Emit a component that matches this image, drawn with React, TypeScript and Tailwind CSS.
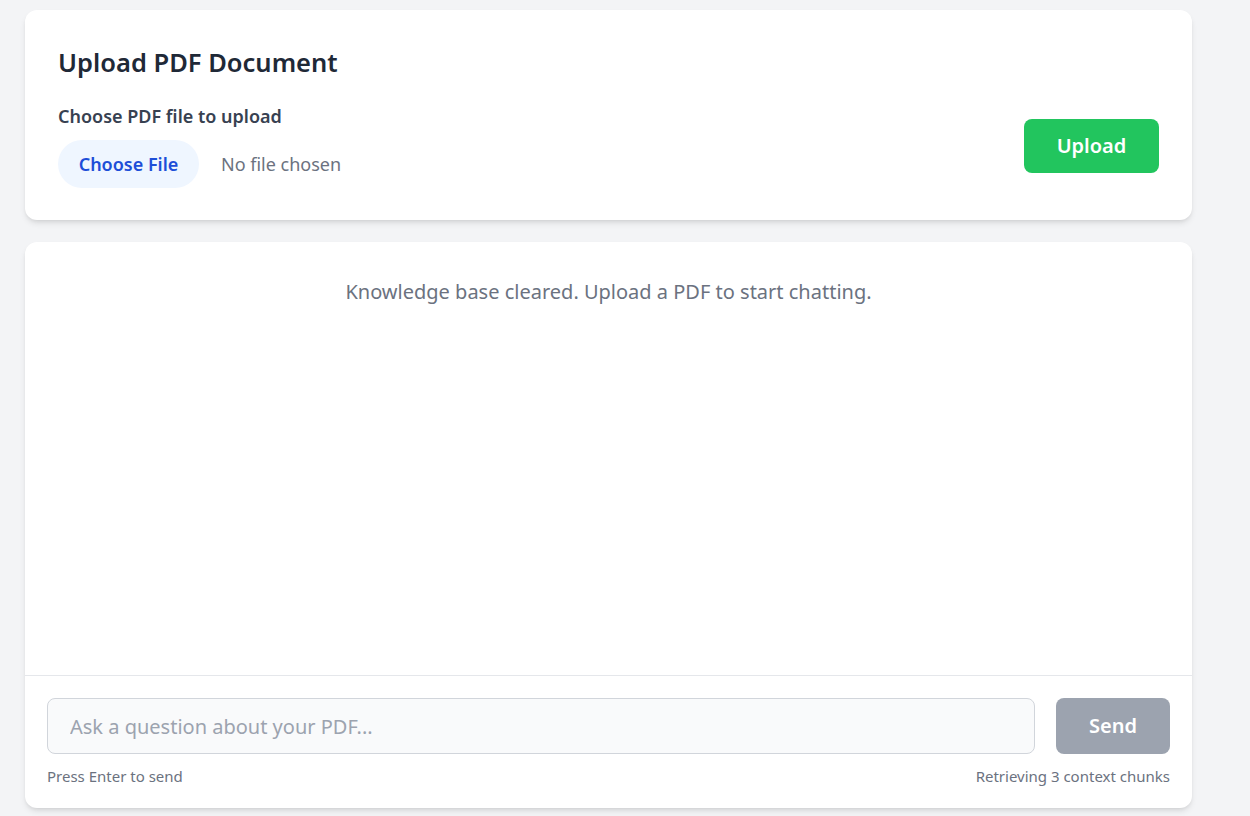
export default function App() {
  return (
    <div className="min-h-screen bg-[#f3f4f6] pl-[25px] pt-[10px] pb-[8px] font-['Noto_Sans',sans-serif]">
      <div className="w-[1167px]">
        {/* Upload card */}
        <div className="h-[210px] bg-white rounded-xl shadow-md px-[33px] pt-[36px]">
          <h1 className="text-[25.5px] leading-[32px] font-semibold text-[#1f2937]">Upload PDF Document</h1>
          <div className="flex items-center justify-between mt-[26px]">
            <div>
              <label className="block text-[18px] leading-[24px] font-semibold text-[#374151]">Choose PDF file to upload</label>
              <div className="flex items-center mt-[12px]">
                <button className="h-[48px] w-[141px] rounded-full bg-[#eff6ff] text-[#1d4ed8] text-[18px] font-semibold">Choose File</button>
                <span className="ml-[22px] text-[18px] text-[#6b7280]">No file chosen</span>
              </div>
            </div>
            <button className="w-[135px] h-[54px] rounded-lg bg-[#22c55e] text-white text-[20px] font-semibold">Upload</button>
          </div>
        </div>

        {/* Chat card */}
        <div className="mt-[22px] h-[566px] bg-white rounded-xl shadow-md flex flex-col">
          <div className="flex-1 pt-[36px] text-center">
            <p className="text-[20px] leading-[28px] text-[#6b7280]">Knowledge base cleared. Upload a PDF to start chatting.</p>
          </div>
          <div className="border-t border-[#e5e7eb] px-[22px] pt-[22px] pb-[22px]">
            <div className="flex gap-[21px]">
              <input
                className="flex-1 h-[56px] rounded-lg border border-[#d1d5db] bg-[#f9fafb] px-[22px] text-[20px] placeholder:text-[#9ca3af] outline-none"
                placeholder="Ask a question about your PDF..."
              />
              <button className="w-[114px] h-[56px] rounded-lg bg-[#9ca3af] text-white text-[20px] font-semibold">Send</button>
            </div>
            <div className="flex justify-between mt-[12px] text-[15px] leading-[20px] text-[#6b7280]">
              <span>Press Enter to send</span>
              <span>Retrieving 3 context chunks</span>
            </div>
          </div>
        </div>
      </div>
    </div>
  );
}
